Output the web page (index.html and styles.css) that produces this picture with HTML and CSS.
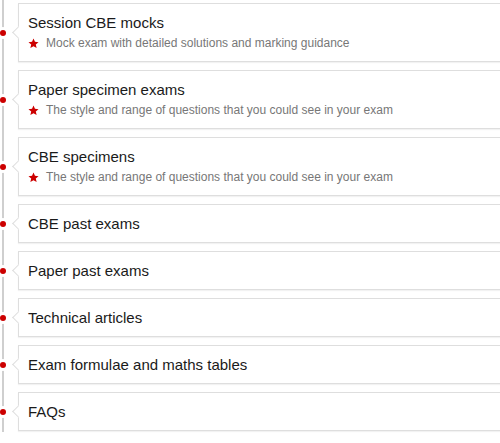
FILE: index.html
```html
<!DOCTYPE html>
<html>
<head>
<meta charset="utf-8">
<link rel="stylesheet" href="styles.css">
</head>
<body>
<ul class="timeline">
  <li class="item">
    <span class="dot"></span>
    <div class="card">
      <div class="title">Session CBE mocks</div>
      <div class="sub"><svg class="star" viewBox="0 0 24 24"><path d="M12 1l3.2 7.3 7.8.7-6 5.3 1.9 7.7L12 17.9 5.1 22 7 14.3 1 9l7.8-.7z"/></svg><span>Mock exam with detailed solutions and marking guidance</span></div>
    </div>
  </li>
  <li class="item">
    <span class="dot"></span>
    <div class="card">
      <div class="title">Paper specimen exams</div>
      <div class="sub"><svg class="star" viewBox="0 0 24 24"><path d="M12 1l3.2 7.3 7.8.7-6 5.3 1.9 7.7L12 17.9 5.1 22 7 14.3 1 9l7.8-.7z"/></svg><span>The style and range of questions that you could see in your exam</span></div>
    </div>
  </li>
  <li class="item">
    <span class="dot"></span>
    <div class="card">
      <div class="title">CBE specimens</div>
      <div class="sub"><svg class="star" viewBox="0 0 24 24"><path d="M12 1l3.2 7.3 7.8.7-6 5.3 1.9 7.7L12 17.9 5.1 22 7 14.3 1 9l7.8-.7z"/></svg><span>The style and range of questions that you could see in your exam</span></div>
    </div>
  </li>
  <li class="item">
    <span class="dot"></span>
    <div class="card"><div class="title">CBE past exams</div></div>
  </li>
  <li class="item">
    <span class="dot"></span>
    <div class="card"><div class="title">Paper past exams</div></div>
  </li>
  <li class="item">
    <span class="dot"></span>
    <div class="card"><div class="title">Technical articles</div></div>
  </li>
  <li class="item">
    <span class="dot"></span>
    <div class="card"><div class="title">Exam formulae and maths tables</div></div>
  </li>
  <li class="item">
    <span class="dot"></span>
    <div class="card"><div class="title">FAQs</div></div>
  </li>
</ul>
</body>
</html>
```
FILE: styles.css
```css
html, body {
  margin: 0;
  padding: 0;
  background: #fff;
}
body {
  font-family: "Liberation Sans", Arial, sans-serif;
  width: 500px;
  height: 443px;
  overflow: hidden;
}
.timeline {
  list-style: none;
  margin: 0;
  padding: 3px 0 0 0;
  position: relative;
  width: 500px;
  display: flex;
  flex-direction: column;
  gap: 8px;
}
.timeline::before {
  content: "";
  position: absolute;
  left: 2px;
  top: 0;
  width: 2px;
  height: 432px;
  background: #cfcfcf;
}
.item {
  position: relative;
  padding-left: 18px;
}
.dot {
  position: absolute;
  left: 0;
  top: 50%;
  width: 6px;
  height: 6px;
  margin-top: -3px;
  border-radius: 50%;
  background: #cc0000;
  box-shadow: 0 0 0 3px #fff;
}
.card {
  position: relative;
  border: 1px solid #dedede;
  border-right: none;
  box-shadow: 0 1px 1px rgba(0, 0, 0, 0.05);
  background: #fff;
  padding: 9px 9px 9px 9px;
}
.card::before {
  content: "";
  position: absolute;
  left: -5px;
  top: 50%;
  width: 8px;
  height: 8px;
  margin-top: -5px;
  background: #fff;
  border-left: 1px solid #dedede;
  border-bottom: 1px solid #dedede;
  transform: rotate(45deg);
}
.title {
  font-size: 15px;
  line-height: 19px;
  color: #1a1a1a;
}
.sub {
  display: flex;
  align-items: center;
  gap: 7px;
  margin-top: 3px;
  margin-bottom: 1px;
  font-size: 12px;
  line-height: 16px;
  color: #777;
}
.star {
  width: 11px;
  height: 11px;
  fill: #cc0000;
  flex: none;
}
```
